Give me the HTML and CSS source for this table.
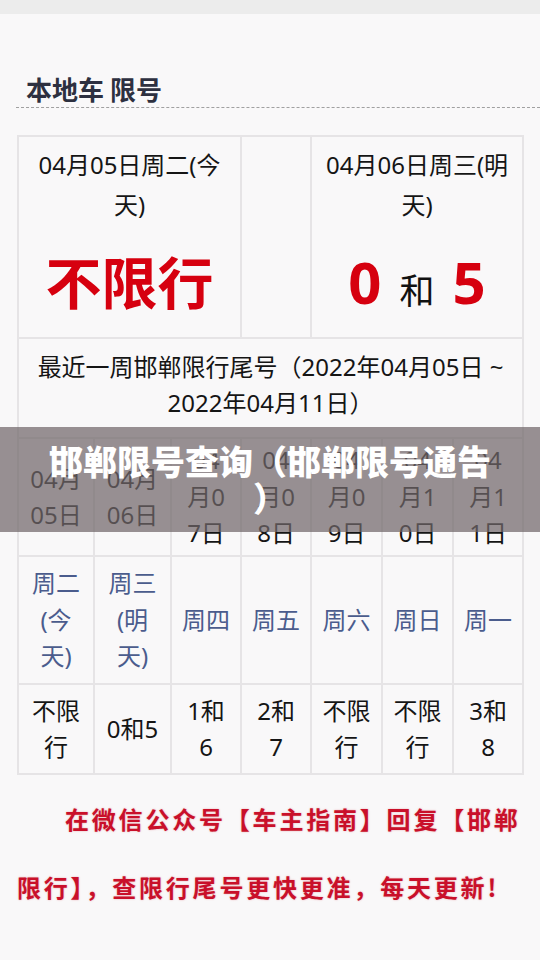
FILE: index.html
```html
<!DOCTYPE html>
<html lang="zh-CN">
<head>
    <meta charset="UTF-8">
    <meta name="viewport" content="width=device-width, initial-scale=1.0">
    <title>邯郸限号查询</title>
    <link rel="stylesheet" href="styles.css">
</head>
<body>

    <div class="topbar"></div>

    <h2 class="section-title">本地车 限号</h2>

    <table class="limit-table">
        <colgroup>
            <col><col><col><col><col><col><col>
        </colgroup>
        <tr class="row-today">
            <td colspan="3" class="day-cell">
                <div class="day-date">04月05日周二(今天)</div>
                <div class="day-big">不限行</div>
            </td>
            <td></td>
            <td colspan="3" class="day-cell">
                <div class="day-date">04月06日周三(明天)</div>
                <div class="day-big"><span class="num">0</span><span class="he">和</span><span class="num">5</span></div>
            </td>
        </tr>
        <tr class="row-title">
            <td colspan="7" class="week-title">最近一周邯郸限行尾号（2022年04月05日 ~ 2022年04月11日）</td>
        </tr>
        <tr class="row-dates">
            <td>04月05日</td>
            <td>04月06日</td>
            <td>04月07日</td>
            <td>04月08日</td>
            <td>04月09日</td>
            <td>04月10日</td>
            <td>04月11日</td>
        </tr>
        <tr class="row-weekday">
            <td>周二(今天)</td>
            <td>周三(明天)</td>
            <td>周四</td>
            <td>周五</td>
            <td>周六</td>
            <td>周日</td>
            <td>周一</td>
        </tr>
        <tr class="row-numbers">
            <td>不限行</td>
            <td>0和5</td>
            <td>1和6</td>
            <td>2和7</td>
            <td>不限行</td>
            <td>不限行</td>
            <td>3和8</td>
        </tr>
    </table>

    <p class="notice">在微信公众号【车主指南】回复【邯郸限行】，查限行尾号更快更准，每天更新!</p>

    <div class="banner">邯郸限号查询（邯郸限号通告）</div>

</body>
</html>
```

FILE: styles.css
```css
body {
    font-family: "Noto Sans", "Noto Sans CJK SC", sans-serif;
    background-color: #f9f8f9;
    color: #151515;
    margin: 0;
    position: relative;
}

.topbar {
    height: 14px;
    background-color: #ececec;
}

.section-title {
    margin: 0 0 0 16px;
    padding: 59px 0 0 10px;
    font-family: "Noto Sans CJK SC", sans-serif;
    font-size: 26px;
    line-height: 32px;
    font-weight: bold;
    color: #2d3040;
    border-bottom: 1px dashed #a0a0a0;
    padding-bottom: 2px;
}

.limit-table {
    margin: 27px 0 0 17px;
    width: 505px;
    table-layout: fixed;
    border-collapse: collapse;
}

.limit-table col:nth-child(1) { width: 76px; }
.limit-table col:nth-child(2) { width: 77px; }
.limit-table col:nth-child(3) { width: 70px; }
.limit-table col:nth-child(4) { width: 70px; }
.limit-table col:nth-child(5) { width: 71px; }
.limit-table col:nth-child(6) { width: 71px; }
.limit-table col:nth-child(7) { width: 70px; }

.limit-table td {
    border: 2px solid #e6e4e6;
    text-align: center;
    vertical-align: middle;
    padding: 0 9.5px;
    font-size: 24px;
    line-height: 36.5px;
    word-break: break-all;
}

.row-today {
    height: 202px;
}

.limit-table .day-cell {
    vertical-align: top;
    padding: 8px 8px 0;
    word-break: normal;
}

.day-date {
    font-size: 24px;
    line-height: 40px;
}

.day-big {
    margin-top: 22px;
    font-size: 56px;
    line-height: 70px;
    font-weight: bold;
    color: #d6000f;
}

.day-big .num {
    font-size: 58px;
}

.day-big .he {
    font-size: 35px;
    font-weight: normal;
    color: #111;
    margin: 0 18px;
}

.row-title {
    height: 100px;
}

.limit-table .week-title {
    padding: 0 10px 6px;
    word-break: normal;
}

.row-dates {
    height: 118px;
}

.row-weekday {
    height: 128px;
}

.row-weekday td {
    color: #4b5c8d;
}

.row-numbers {
    height: 90px;
}

.notice {
    margin: 10px 18px 0 17px;
    text-indent: 2em;
    font-family: "Noto Sans CJK SC", sans-serif;
    font-size: 24px;
    line-height: 68px;
    letter-spacing: 2.8px;
    font-weight: bold;
    color: #c9102a;
    text-shadow: 0 0 2px rgba(201, 16, 42, 0.35);
}

.banner {
    position: absolute;
    top: 427px;
    left: 0;
    right: 0;
    height: 105px;
    box-sizing: border-box;
    padding: 15px 46px 0;
    background-color: rgba(112, 102, 105, 0.72);
    color: #fff;
    text-align: center;
    font-family: "Noto Sans CJK SC", sans-serif;
    font-size: 34px;
    line-height: 37px;
    font-weight: 900;
    line-break: anywhere;
}
```
